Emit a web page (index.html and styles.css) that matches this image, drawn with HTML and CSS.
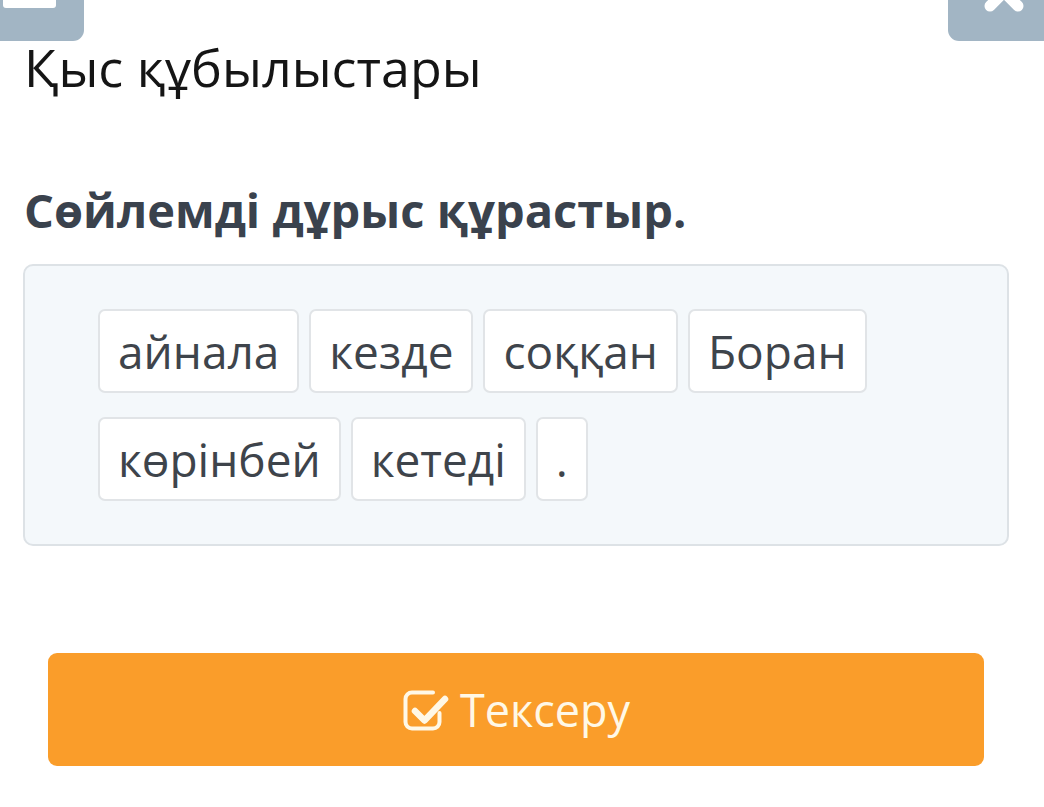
FILE: index.html
```html
<!DOCTYPE html>
<html lang="kk">
<head>
<meta charset="utf-8">
<title>Қыс құбылыстары</title>
<link rel="stylesheet" href="styles.css">
</head>
<body>
<div class="topbar">
  <div class="tb-btn tb-menu">
    <svg class="tb-icon" width="84" height="41" viewBox="0 0 84 41"><rect x="3" y="-6" width="53" height="14" rx="3" fill="#fff"/></svg>
  </div>
  <div class="tb-btn tb-close">
    <svg class="tb-icon" width="96" height="41" viewBox="0 0 96 41"><path d="M42 6 L70 -22 M70 6 L42 -22" stroke="#fff" stroke-width="11" stroke-linecap="round" fill="none"/></svg>
  </div>
</div>
<main class="page">
  <h1 class="title">Қыс құбылыстары</h1>
  <h2 class="task">Сөйлемді дұрыс құрастыр.</h2>
  <div class="board">
    <div class="tile">айнала</div>
    <div class="tile">кезде</div>
    <div class="tile">соққан</div>
    <div class="tile">Боран</div>
    <div class="tile">көрінбей</div>
    <div class="tile">кетеді</div>
    <div class="tile">.</div>
  </div>
  <button class="check-btn" type="button">
    <svg class="check-icon" width="48" height="44" viewBox="0 0 48 44"><path d="M31 3.5 H10 a6.5 6.5 0 0 0 -6.5 6.5 V33 a6.5 6.5 0 0 0 6.5 6.5 H31 a6.5 6.5 0 0 0 6.5 -6.5 V24" stroke="#fff8e6" stroke-width="4" fill="none" stroke-linecap="round"/><path d="M13 22 L22.5 31.5 L43 10" stroke="#fff8e6" stroke-width="6.5" fill="none" stroke-linecap="round" stroke-linejoin="round"/></svg>
    <span>Тексеру</span>
  </button>
</main>
</body>
</html>
```

FILE: styles.css
```css
* { box-sizing: border-box; }
html, body { margin: 0; padding: 0; background: #fff; }
body {
  font-family: "Open Sans", "Noto Sans", sans-serif;
  width: 1044px;
  height: 807px;
  overflow: hidden;
}
.topbar {
  display: flex;
  justify-content: space-between;
  height: 41px;
}
.tb-btn {
  height: 41px;
  background: #a2b5c4;
  overflow: hidden;
}
.tb-icon { display: block; }
.tb-menu {
  width: 84px;
  border-bottom-right-radius: 11px;
}
.tb-close {
  width: 96px;
  border-bottom-left-radius: 11px;
}
.page {
  padding: 0 35px 0 23px;
}
.title {
  margin: 0 0 0 1px;
  font-size: 52px;
  line-height: 52px;
  font-weight: 400;
  color: #151515;
}
.task {
  margin: 89px 0 0 1px;
  font-size: 47px;
  line-height: 56px;
  font-weight: 700;
  color: #3a424d;
}
.board {
  margin-top: 26px;
  height: 282px;
  border: 2px solid #dde2e6;
  border-radius: 10px;
  background: #f4f8fb;
  padding: 43px 40px 43px 73px;
  display: flex;
  flex-wrap: wrap;
  align-content: flex-start;
  column-gap: 10px;
  row-gap: 24px;
}
.tile {
  height: 84px;
  padding: 0 18px;
  border: 2px solid #e1e4e7;
  border-radius: 7px;
  background: #fff;
  color: #3e444b;
  font-size: 46px;
  line-height: 80px;
}
.check-btn {
  display: flex;
  align-items: center;
  justify-content: center;
  gap: 10px;
  margin: 107px 25px 0 25px;
  width: 936px;
  height: 113px;
  border: none;
  border-radius: 9px;
  background: #fa9d2a;
  color: #fff8e6;
  font-family: "Open Sans", "Noto Sans", sans-serif;
  font-size: 45px;
  padding: 0;
}
.check-icon { display: block; margin-top: 2px; }
```
